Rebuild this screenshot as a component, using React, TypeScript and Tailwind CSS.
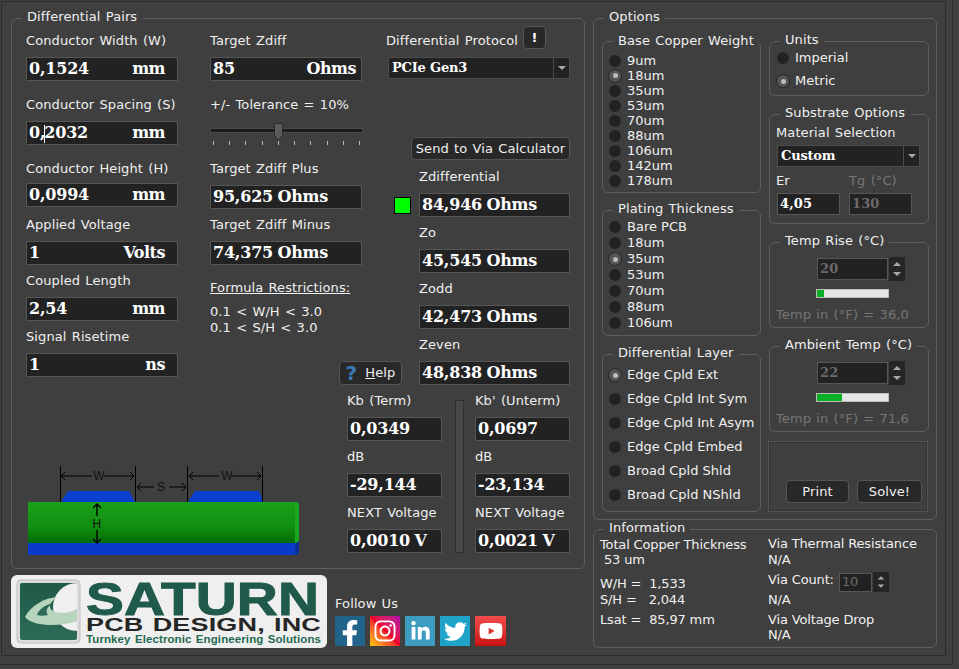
import type { ReactNode } from "react";
import { FaFacebookF, FaInstagram, FaLinkedinIn, FaTwitter, FaYoutube } from "react-icons/fa";

function Group({ title, className, inner = "", legendClass = "leading-[14px]", children }: { title: string; className: string; inner?: string; legendClass?: string; children?: ReactNode }) {
  return (
    <fieldset className={`rounded-md border border-[#5e5e5e] ${className}`}>
      <legend className={`ml-[10px] h-4 whitespace-nowrap px-[5px] ${legendClass}`}>{title}</legend>
      <div className={inner}>{children}</div>
    </fieldset>
  );
}

function Label({ children, className = "" }: { children: ReactNode; className?: string }) {
  return <div className={`h-4 leading-[18px] whitespace-pre ${className}`}>{children}</div>;
}

function Field({ value, unit, className = "", unitClass = "pr-[12px]" }: { value: ReactNode; unit?: string; className?: string; unitClass?: string }) {
  return (
    <div className={`flex h-6 items-center justify-between border border-[#565656] bg-[#222222] pl-[2px] font-['DejaVu_Serif'] text-[16px] font-bold tracking-[-0.2px] text-white [word-spacing:-1px] ${className}`}>
      <span className="whitespace-pre">{value}</span>
      {unit && <span className={`tracking-[-0.5px] ${unitClass}`}>{unit}</span>}
    </div>
  );
}

function Btn({ children, className = "" }: { children: ReactNode; className?: string }) {
  return (
    <div className={`flex items-center justify-center rounded-[4px] border border-[#555555] bg-[#282828] ${className}`}>{children}</div>
  );
}

function Radio({ label, on = false, className = "" }: { label: string; on?: boolean; className?: string }) {
  return (
    <div className={`flex items-center gap-[6px] tracking-normal [word-spacing:0] ${className}`}>
      <span className={`flex h-3 w-3 shrink-0 items-center justify-center rounded-full ${on ? "bg-[#555555] ring-1 ring-[#2a2a2a]" : "bg-[#222222]"}`}>
        {on && <span className="h-[5px] w-[5px] rounded-full bg-[#bdbdbd]" />}
      </span>
      <span className="whitespace-pre">{label}</span>
    </div>
  );
}

function Arrow({ className = "" }: { className?: string }) {
  return (
    <svg viewBox="0 0 16 24" className={className}>
      <path d="M4 9l4-4 4 4zM4 15h8l-4 4z" fill="#a8a8a8" />
    </svg>
  );
}

function Select({ text, className }: { text: string; className: string }) {
  return (
    <div className={`flex items-center border border-[#4c4c4c] bg-[#222222] ${className}`}>
      <span className="flex-1 pl-[3px] font-['DejaVu_Serif'] text-[13px] font-bold tracking-[-0.2px] text-white [word-spacing:0]">{text}</span>
      <span className="flex h-full w-4 items-center justify-center border-l border-[#4c4c4c]">
        <svg viewBox="0 0 8 4" className="h-1 w-2">
          <path d="M0 0h8l-4 4z" fill="#a8a8a8" />
        </svg>
      </span>
    </div>
  );
}

function TempBox({ title, value, fill, temp, className = "" }: { title: string; value: string; fill: string; temp: string; className?: string }) {
  return (
    <Group title={title} className={`h-[94px] w-[160px] ${className}`}>
      <div className="ml-[47px] mt-[7px] flex h-6 items-center">
        <div className="flex h-[22px] w-[71px] items-center border border-[#565656] bg-[#222222] pl-[2px] font-['DejaVu_Serif'] text-[13px] font-bold text-[#6a6a6a]">{value}</div>
        <div className="ml-px h-6 w-4 bg-[#252525]">
          <Arrow className="h-6 w-4" />
        </div>
      </div>
      <div className="ml-[46px] mt-[8px] h-[9px] w-[73px] border border-[#bdbdbd] bg-[#e6e6e6]">
        <div className={`h-full bg-[#06b025] ${fill}`} />
      </div>
      <Label className="ml-[6px] mt-[8px] text-[#767676]">{temp}</Label>
    </Group>
  );
}

function PcbDiagram() {
  return (
    <svg width="271" height="89" viewBox="28 466 271 89" className="ml-[2px] block">
      <defs>
        <linearGradient id="board" x1="0" y1="0" x2="0" y2="1">
          <stop offset="0" stopColor="#1aa11a" />
          <stop offset="0.6" stopColor="#108e10" />
          <stop offset="1" stopColor="#056c05" />
        </linearGradient>
      </defs>
      <path d="M61 502l7-11h61l6 11zM188 502l7-11h64l4 11z" fill="#0a3fd0" />
      <rect x="28" y="502" width="268" height="41" fill="url(#board)" />
      <path d="M295 502h2l2 2v37l-4 3z" fill="#1aa820" />
      <rect x="28" y="543" width="268" height="12" fill="#0a3bc8" />
      <path d="M295 544l4-3v13l-1 1h-3z" fill="#0a2f96" />
      <g stroke="#000" strokeWidth="1" fill="none">
        <path d="M60.5 466v36M135.5 466v36M187.5 466v36M262.5 466v36" />
        <path d="M62 476h30M104 476h30M65 472l-4 4 4 4M130 472l4 4-4 4" />
        <path d="M137 487h17M169 487h17M141 483l-4 4 4 4M182 483l4 4-4 4" />
        <path d="M189 476h30M231 476h30M193 472l-4 4 4 4M257 472l4 4-4 4" />
        <path d="M97 504v12M97 530v13M93 508l4-4 4 4M93 539l4 4 4-4" strokeWidth="1.4" />
      </g>
      <g fontFamily="'Liberation Sans', sans-serif" fontSize="12" fill="#111" textAnchor="middle">
        <text x="99" y="480">W</text>
        <text x="161" y="491">S</text>
        <text x="227" y="480">W</text>
        <text x="97" y="528">H</text>
      </g>
    </svg>
  );
}

function Logo() {
  return (
    <div className="h-[73px] w-[316px] rounded-md bg-[#efefef]">
      <svg width="316" height="73" viewBox="0 0 316 73" className="block overflow-visible">
        <defs>
          <linearGradient id="emblem" x1="0" y1="0" x2="0" y2="1">
            <stop offset="0" stopColor="#1f5a49" />
            <stop offset="1" stopColor="#2d6b58" />
          </linearGradient>
          <clipPath id="emblemClip">
            <rect x="9" y="8" width="57" height="57" rx="2" />
          </clipPath>
        </defs>
        <rect x="6" y="5" width="63" height="63" rx="4" fill="#dcdcdc" stroke="#bdbdbd" />
        <rect x="9" y="8" width="57" height="57" rx="2" fill="url(#emblem)" />
        <g clipPath="url(#emblemClip)">
          <circle cx="66" cy="32" r="24" fill="#efefef" />
          <path d="M14 42C20 30 34 23 46 22 38 28 36 34 44 37 50 39 60 38 67 33V46C50 52 22 52 14 42Z" fill="#b7d4bc" />
          <path d="M26 40C28 34 34 30 42 28 36 32 34 36 37 40 33 41 29 41 26 40Z" fill="#2c6a57" />
        </g>
        <g fontFamily="'Liberation Sans', sans-serif" fontWeight="700">
          <text x="75" y="40" fontSize="47" textLength="233" lengthAdjust="spacingAndGlyphs" fill="#1f5a4a" stroke="#1f5a4a" strokeWidth="1">SATURN</text>
          <text x="75" y="56" fontSize="18" textLength="235" lengthAdjust="spacingAndGlyphs" fill="#262626">PCB DESIGN, INC</text>
          <text x="75" y="68" fontSize="11" textLength="235" lengthAdjust="spacingAndGlyphs" fill="#1f6a50">Turnkey Electronic Engineering Solutions</text>
        </g>
      </svg>
    </div>
  );
}

function Slider() {
  const ticks = [0, 1, 2, 3, 4, 5, 6, 7, 8, 9];
  return (
    <div className="relative mt-[8px] h-[26px] w-[153px] pt-[8px]">
      <div className="h-[5px] w-full border border-[#4a4a4a] bg-[#1c1c1c]" />
      <svg viewBox="0 0 9 17" className="absolute left-[64px] top-[3px] h-[17px] w-[9px]">
        <path d="M.5.5h8v12l-4 4-4-4z" fill="#5b5b5b" stroke="#2a2a2a" />
      </svg>
      <div className="mx-[3px] mt-[8px] flex justify-between">
        {ticks.map((t) => (
          <span key={t} className="h-1 w-px bg-[#b5b5b5]" />
        ))}
      </div>
    </div>
  );
}

export default function App() {
  const social = "flex h-[30px] w-[30px] items-center justify-center text-white";
  return (
    <div className="h-[669px] w-[959px] overflow-hidden bg-[#3f3f3f] font-['DejaVu_Sans',sans-serif] text-[13px] tracking-[0.1px] text-[#f0f0f0] [word-spacing:1px]">
      <div className="h-[664px] w-[953px] border-b border-r border-[#2c2c2c]">
        <div className="ml-px mt-px h-[655px] w-[945px] border border-[#2c2c2c] pl-[9px] pt-[8px]">
          <div className="flex gap-[8px]">
            {/* left side */}
            <div className="w-[574px]">
              <Group title="Differential Pairs" className="h-[559px] w-[574px]" inner="px-[14px]">
                <div className="flex h-[359px]">
                  <div className="w-[152px] pt-[6px]">
                    <Label>Conductor Width (W)</Label>
                    <Field className="mt-[9px]" value="0,1524" unit="mm" />
                    <Label className="mt-[15px]">Conductor Spacing (S)</Label>
                    <Field
                      className="mt-[9px]"
                      value={
                        <>
                          0,<span className="-mx-px inline-block h-[18px] w-px bg-white align-middle" />2032
                        </>
                      }
                      unit="mm"
                    />
                    <Label className="mt-[15px]">Conductor Height (H)</Label>
                    <Field className="mt-[7px]" value="0,0994" unit="mm" />
                    <Label className="mt-[9px]">Applied Voltage</Label>
                    <Field className="mt-[9px]" value="1" unit="Volts" />
                    <Label className="mt-[7px]">Coupled Length</Label>
                    <Field className="mt-[9px]" value="2,54" unit="mm" />
                    <Label className="mt-[7px]">Signal Risetime</Label>
                    <Field className="mt-[9px]" value="1" unit="ns" />
                  </div>
                  <div className="ml-[32px] w-[152px] pt-[6px]">
                    <Label>Target Zdiff</Label>
                    <Field className="mt-[9px]" value="85" unit="Ohms" unitClass="pr-[5px]" />
                    <Label className="mt-[15px]">+/- Tolerance = 10%</Label>
                    <Slider />
                    <Label className="mt-[14px]">Target Zdiff Plus</Label>
                    <Field className="mt-[9px]" value="95,625 Ohms" />
                    <Label className="mt-[7px]">Target Zdiff Minus</Label>
                    <Field className="mt-[9px]" value="74,375 Ohms" />
                    <Label className="mt-[14px] underline">Formula Restrictions:</Label>
                    <Label className="mt-[8px]">0.1 &lt; W/H &lt; 3.0</Label>
                    <Label>0.1 &lt; S/H &lt; 3.0</Label>
                  </div>
                  <div className="ml-[24px] w-[184px]">
                    <div className="flex h-[23px] items-center">
                      <Label className="mt-[5px] w-[137px]">Differential Protocol</Label>
                      <Btn className="h-[23px] w-[23px] font-bold text-white">!</Btn>
                    </div>
                    <Select text="PCIe Gen3" className="ml-[2px] mt-[8px] h-[22px] w-[182px]" />
                    <Btn className="ml-[25px] mt-[58px] h-[23px] w-[159px]">Send to Via Calculator</Btn>
                    <Label className="ml-[33px] mt-[8px]">Zdifferential</Label>
                    <div className="mt-[9px] flex items-center">
                      <span className="ml-[8px] mr-[8px] h-[17px] w-[17px] border border-black bg-[#00ff00]" />
                      <Field className="w-[151px]" value="84,946 Ohms" />
                    </div>
                    <Label className="ml-[33px] mt-[7px]">Zo</Label>
                    <Field className="ml-[33px] mt-[9px] w-[151px]" value="45,545 Ohms" />
                    <Label className="ml-[33px] mt-[7px]">Zodd</Label>
                    <Field className="ml-[33px] mt-[9px] w-[151px]" value="42,473 Ohms" />
                    <Label className="ml-[33px] mt-[7px]">Zeven</Label>
                    <div className="-ml-[47px] mt-[9px] flex gap-[17px]">
                      <Btn className="h-6 w-[63px] gap-[8px]">
                        <span className="text-[20px] font-bold leading-none text-[#3a78b8]">?</span>
                        <span>
                          <span className="underline">H</span>elp
                        </span>
                      </Btn>
                      <Field className="w-[151px]" value="48,838 Ohms" />
                    </div>
                  </div>
                </div>
                <div className="mt-[7px] flex h-[163px] items-end">
                  <PcbDiagram />
                  <div className="mb-[2px] ml-[48px] flex h-[161px]">
                    <div className="w-[95px]">
                      <Label>Kb (Term)</Label>
                      <Field className="mt-[9px]" value="0,0349" />
                      <Label className="mt-[7px]">dB</Label>
                      <Field className="mt-[9px]" value="-29,144" />
                      <Label className="mt-[7px]">NEXT Voltage</Label>
                      <Field className="mt-[9px]" value="0,0010 V" />
                    </div>
                    <div className="ml-[13px] mt-[8px] h-[153px] w-[9px] border border-[#2e2e2e] bg-[#484848]" />
                    <div className="ml-[11px] w-[95px]">
                      <Label>Kb' (Unterm)</Label>
                      <Field className="mt-[9px]" value="0,0697" />
                      <Label className="mt-[7px]">dB</Label>
                      <Field className="mt-[9px]" value="-23,134" />
                      <Label className="mt-[7px]">NEXT Voltage</Label>
                      <Field className="mt-[9px]" value="0,0021 V" />
                    </div>
                  </div>
                </div>
              </Group>
              <div className="mt-[6px] flex">
                <Logo />
                <div className="ml-[8px] pt-[20px]">
                  <Label>Follow Us</Label>
                  <div className="mt-[5px] flex gap-[5px]">
                    <div className={`${social} overflow-hidden bg-[#22638a]`}><FaFacebookF className="mt-[5px] h-[27px] w-[22px]" /></div>
                    <div className={`${social} bg-gradient-to-tr from-[#ffc400] via-[#f0002a] to-[#b400a8]`}><FaInstagram className="h-[24px] w-[24px]" /></div>
                    <div className={`${social} bg-[#3d9dc1]`}><FaLinkedinIn className="h-[21px] w-[21px]" /></div>
                    <div className={`${social} bg-[#1fa3c9]`}><FaTwitter className="h-[23px] w-[23px]" /></div>
                    <div className={`${social} w-[31px] bg-gradient-to-b from-[#f24b4b] to-[#c80f0f]`}><FaYoutube className="h-[24px] w-[24px]" /></div>
                  </div>
                </div>
              </div>
            </div>

            {/* right side */}
            <div className="w-[344px]">
              <Group title="Options" className="h-[510px] w-[344px]" inner="pl-[8px]">
                <div className="flex gap-[8px] pt-[7px]">
                  <div className="w-[159px]">
                    <Group title="Base Copper Weight" legendClass="leading-4" className="h-[160px] w-[159px]" inner="pl-[6px] pt-[4px]">
                      {["9um", "18um", "35um", "53um", "70um", "88um", "106um", "142um", "178um"].map((t) => (
                        <Radio key={t} label={t} on={t === "18um"} className="h-[15px]" />
                      ))}
                    </Group>
                    <Group title="Plating Thickness" className="mt-[9px] h-[134px] w-[159px]" inner="pl-[6px] pt-px">
                      {["Bare PCB", "18um", "35um", "53um", "70um", "88um", "106um"].map((t) => (
                        <Radio key={t} label={t} on={t === "35um"} className="h-4" />
                      ))}
                    </Group>
                    <Group title="Differential Layer" className="mt-[10px] h-[166px] w-[159px]" inner="pl-[6px] pt-px">
                      {["Edge Cpld Ext", "Edge Cpld Int Sym", "Edge Cpld Int Asym", "Edge Cpld Embed", "Broad Cpld Shld", "Broad Cpld NShld"].map((t) => (
                        <Radio key={t} label={t} on={t === "Edge Cpld Ext"} className="h-6" />
                      ))}
                    </Group>
                  </div>
                  <div className="w-[160px]">
                    <Group title="Units" className="h-[63px] w-[160px]" inner="pl-[7px]">
                      <Radio label="Imperial" className="h-[18px]" />
                      <Radio label="Metric" on className="mt-[5px] h-[18px]" />
                    </Group>
                    <Group title="Substrate Options" className="mt-[10px] h-[118px] w-[160px]" inner="pl-[6px] pt-[2px]">
                      <Label>Material Selection</Label>
                      <Select text="Custom" className="ml-px mt-[5px] h-[22px] w-[143px]" />
                      <div className="mt-[5px] flex">
                        <Label className="w-[73px]">Er</Label>
                        <Label className="text-[#767676]">Tg (°C)</Label>
                      </div>
                      <div className="ml-px mt-[5px] flex gap-[9px]">
                        <div className="flex h-[22px] w-[63px] items-center border border-[#565656] bg-[#222222] pl-[2px] font-['DejaVu_Serif'] text-[13px] font-bold text-white">4,05</div>
                        <div className="flex h-[22px] w-[63px] items-center border border-[#565656] bg-[#222222] pl-[2px] font-['DejaVu_Serif'] text-[13px] font-bold text-[#6a6a6a]">130</div>
                      </div>
                    </Group>
                    <TempBox className="mt-[10px]" title="Temp Rise (°C)" value="20" fill="w-[7px]" temp="Temp in (°F) = 36,0" />
                    <TempBox className="mt-[10px]" title="Ambient Temp (°C)" value="22" fill="w-[25px]" temp="Temp in (°F) = 71,6" />
                    <div className="-ml-px mt-[9px] flex h-[71px] w-[160px] items-end justify-end gap-[8px] border border-[#555555] pb-[8px] pr-[5px] shadow-[inset_0_0_0_1px_#333333]">
                      <Btn className="h-[23px] w-[63px]">Print</Btn>
                      <Btn className="h-[23px] w-[65px]">Solve!</Btn>
                    </div>
                  </div>
                </div>
              </Group>
              <Group title="Information" className="mt-px h-[127px] w-[344px]" inner="pl-[6px] tracking-[-0.15px] [word-spacing:0]">
                <div className="flex">
                  <div className="-mt-px w-[168px]">
                    <Label>Total Copper Thickness</Label>
                    <Label className="-mt-px"> 53 um</Label>
                    <Label className="mt-[8px]">W/H =  1,533</Label>
                    <Label>S/H =   2,044</Label>
                    <Label className="mt-[4px]">Lsat =  85,97 mm</Label>
                  </div>
                  <div className="-mt-[2px]">
                    <Label>Via Thermal Resistance</Label>
                    <Label>N/A</Label>
                    <div className="mt-[5px] flex h-5 items-center gap-[6px]">
                      <span className="-mt-[4px] w-[65px] whitespace-nowrap">Via Count:</span>
                      <div className="flex items-center">
                        <div className="flex h-[19px] w-[33px] items-center border border-[#565656] bg-[#222222] pl-[2px] text-[#6a6a6a]">10</div>
                        <div className="ml-px h-5 w-4 bg-[#252525]">
                          <Arrow className="h-5 w-4" />
                        </div>
                      </div>
                    </div>
                    <Label className="-mt-px">N/A</Label>
                    <Label className="mt-[4px]">Via Voltage Drop</Label>
                    <Label className="-mt-px">N/A</Label>
                  </div>
                </div>
              </Group>
            </div>
          </div>
        </div>
      </div>
    </div>
  );
}
